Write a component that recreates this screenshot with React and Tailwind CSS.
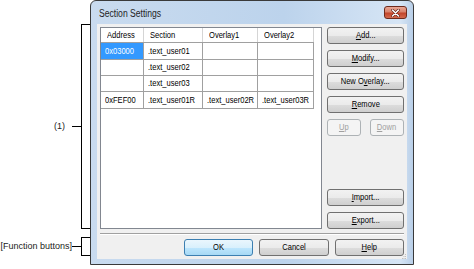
const ui = { fontFamily: '"Liberation Sans", Arial, sans-serif' };

function N({ children, className = "origin-left" }) {
  return <span className={`inline-block whitespace-nowrap scale-x-[0.84] ${className}`}>{children}</span>;
}

function Btn({ children, className = "", disabled = false, isDefault = false }) {
  const base = isDefault
    ? "border-[#3c7fb1] bg-[linear-gradient(#eaf6fd_0%,#d9f0fc_50%,#bee6fd_51%,#a7d9f5_100%)]"
    : disabled
    ? "border-[#adb2b5] bg-[#f4f4f4] text-[#a0a0a0]"
    : "border-[#707070] bg-[linear-gradient(#f2f2f2_0%,#ebebeb_50%,#dddddd_51%,#cfcfcf_100%)]";
  return (
    <div
      className={`h-[17px] flex items-center justify-center rounded-[3px] border text-[9px] leading-none ${base} ${className}`}
    >
      <N className="origin-center">{children}</N>
    </div>
  );
}

const cols = [43, 59, 55, 56];
const rows = [
  { h: 17, cells: ["0x03000", ".text_user01", "", ""], sel: true },
  { h: 16, cells: ["", ".text_user02", "", ""] },
  { h: 16, cells: ["", ".text_user03", "", ""] },
  { h: 17, cells: ["0xFEF00", ".text_user01R", ".text_user02R", ".text_user03R"] },
];

function Table() {
  return (
    <div className="w-[222px] h-[202px] border border-[#828790] bg-white text-[9px] leading-none">
      <div className="flex h-[15px] border-b border-[#a0a0a0] w-[213px]">
        {["Address", "Section", "Overlay1", "Overlay2"].map((t, i) => (
          <div
            key={t}
            style={{ width: cols[i] }}
            className="border-r border-[#d5d5d5] flex items-center pl-[6px] shrink-0"
          >
            <N>{t}</N>
          </div>
        ))}
      </div>
      {rows.map((r, ri) => (
        <div key={ri} style={{ height: r.h }} className="flex border-b border-[#a0a0a0] w-[213px]">
          {r.cells.map((c, i) => (
            <div
              key={i}
              style={{ width: cols[i] }}
              className={`border-r border-[#a0a0a0] flex items-center pl-[4px] shrink-0 ${
                r.sel && i === 0 ? "bg-[#3399ff] text-white" : ""
              }`}
            >
              <N>{c}</N>
            </div>
          ))}
        </div>
      ))}
    </div>
  );
}

function Dialog() {
  return (
    <div
      style={ui}
      className="w-[324px] h-[265px] flex flex-col border border-[#3a3a3a] rounded-t-[6px] bg-[linear-gradient(90deg,#c9dbef_0%,#bcd3ec_60%,#d6e5f5_96%,#b9cfe8_100%)] text-black"
    >
      <div className="h-[23px] flex items-center justify-between pl-[8px] pr-[6px] pt-[1px]">
        <span className="text-[10px] text-[#1e1e1e] inline-block origin-left scale-x-[0.86] whitespace-nowrap">
          Section Settings
        </span>
        <div className="w-[23px] h-[13px] mt-[-1px] rounded-[3px] border border-[#6e2a1c] bg-[linear-gradient(#e9a795_0%,#d9826b_45%,#c2452b_55%,#d46a4e_100%)] flex items-center justify-center">
          <svg width="9" height="8" viewBox="0 0 9 8">
            <path d="M1.5 1 L7.5 7 M7.5 1 L1.5 7" stroke="#5a1a10" strokeWidth="2.6" strokeLinecap="round" />
            <path d="M1.5 1 L7.5 7 M7.5 1 L1.5 7" stroke="#ffffff" strokeWidth="1.5" strokeLinecap="round" />
          </svg>
        </div>
      </div>
      <div className="mx-[6px] flex-1 mb-[5px] bg-[#f0f0f0] flex flex-col px-[3px] pt-[3px] pb-[3px] relative">
        <div className="flex gap-[5px] h-[202px]">
          <Table />
          <div className="w-[77px] flex flex-col justify-between">
            <div className="flex flex-col gap-[6px]">
              <Btn><span className="underline">A</span>dd...</Btn>
              <Btn><span className="underline">M</span>odify...</Btn>
              <Btn>New O<span className="underline">v</span>erlay...</Btn>
              <Btn><span className="underline">R</span>emove</Btn>
              <div className="flex justify-between">
                <Btn disabled className="w-[34px]"><span className="underline">U</span>p</Btn>
                <Btn disabled className="w-[34px]"><span className="underline">D</span>own</Btn>
              </div>
            </div>
            <div className="flex flex-col gap-[6px]">
              <Btn><span className="underline">I</span>mport...</Btn>
              <Btn><span className="underline">E</span>xport...</Btn>
            </div>
          </div>
        </div>
        <div className="mt-[4px] border-t border-[#a0a0a0] border-b border-b-white" />
        <div className="mt-[4px] flex justify-end gap-[6px]">
          <Btn isDefault className="w-[69px]">OK</Btn>
          <Btn className="w-[70px]">Cancel</Btn>
          <Btn className="w-[69px]"><span className="underline">H</span>elp</Btn>
        </div>
        <svg className="absolute right-[0px] bottom-[0px]" width="5" height="5" viewBox="0 0 5 5">
          <rect x="3" y="0" width="1" height="1" fill="#c0c0c0" />
          <rect x="1.5" y="2" width="1" height="1" fill="#c0c0c0" />
          <rect x="3" y="2" width="1" height="1" fill="#c0c0c0" />
          <rect x="0" y="4" width="1" height="1" fill="#c0c0c0" />
          <rect x="1.5" y="4" width="1" height="1" fill="#c0c0c0" />
          <rect x="3" y="4" width="1" height="1" fill="#c0c0c0" />
        </svg>
      </div>
    </div>
  );
}

function Bracket({ label, h, gap }) {
  return (
    <div style={{ height: h }} className="flex items-center justify-end">
      <span style={ui} className="text-[9px] leading-none text-[#222] whitespace-nowrap">{label}</span>
      <div style={{ marginLeft: gap }} className="w-[9px] h-px bg-black" />
      <div className="w-[9px] h-full border border-r-0 border-black" />
    </div>
  );
}

export default function App() {
  return (
    <div className="w-[474px] h-[269px] bg-white flex">
      <div className="w-[90px] flex flex-col pt-[24px] gap-[8px]">
        <Bracket label="(1)" h={205} gap={7} />
        <Bracket label="[Function buttons]" h={19} gap={0} />
      </div>
      <Dialog />
    </div>
  );
}
